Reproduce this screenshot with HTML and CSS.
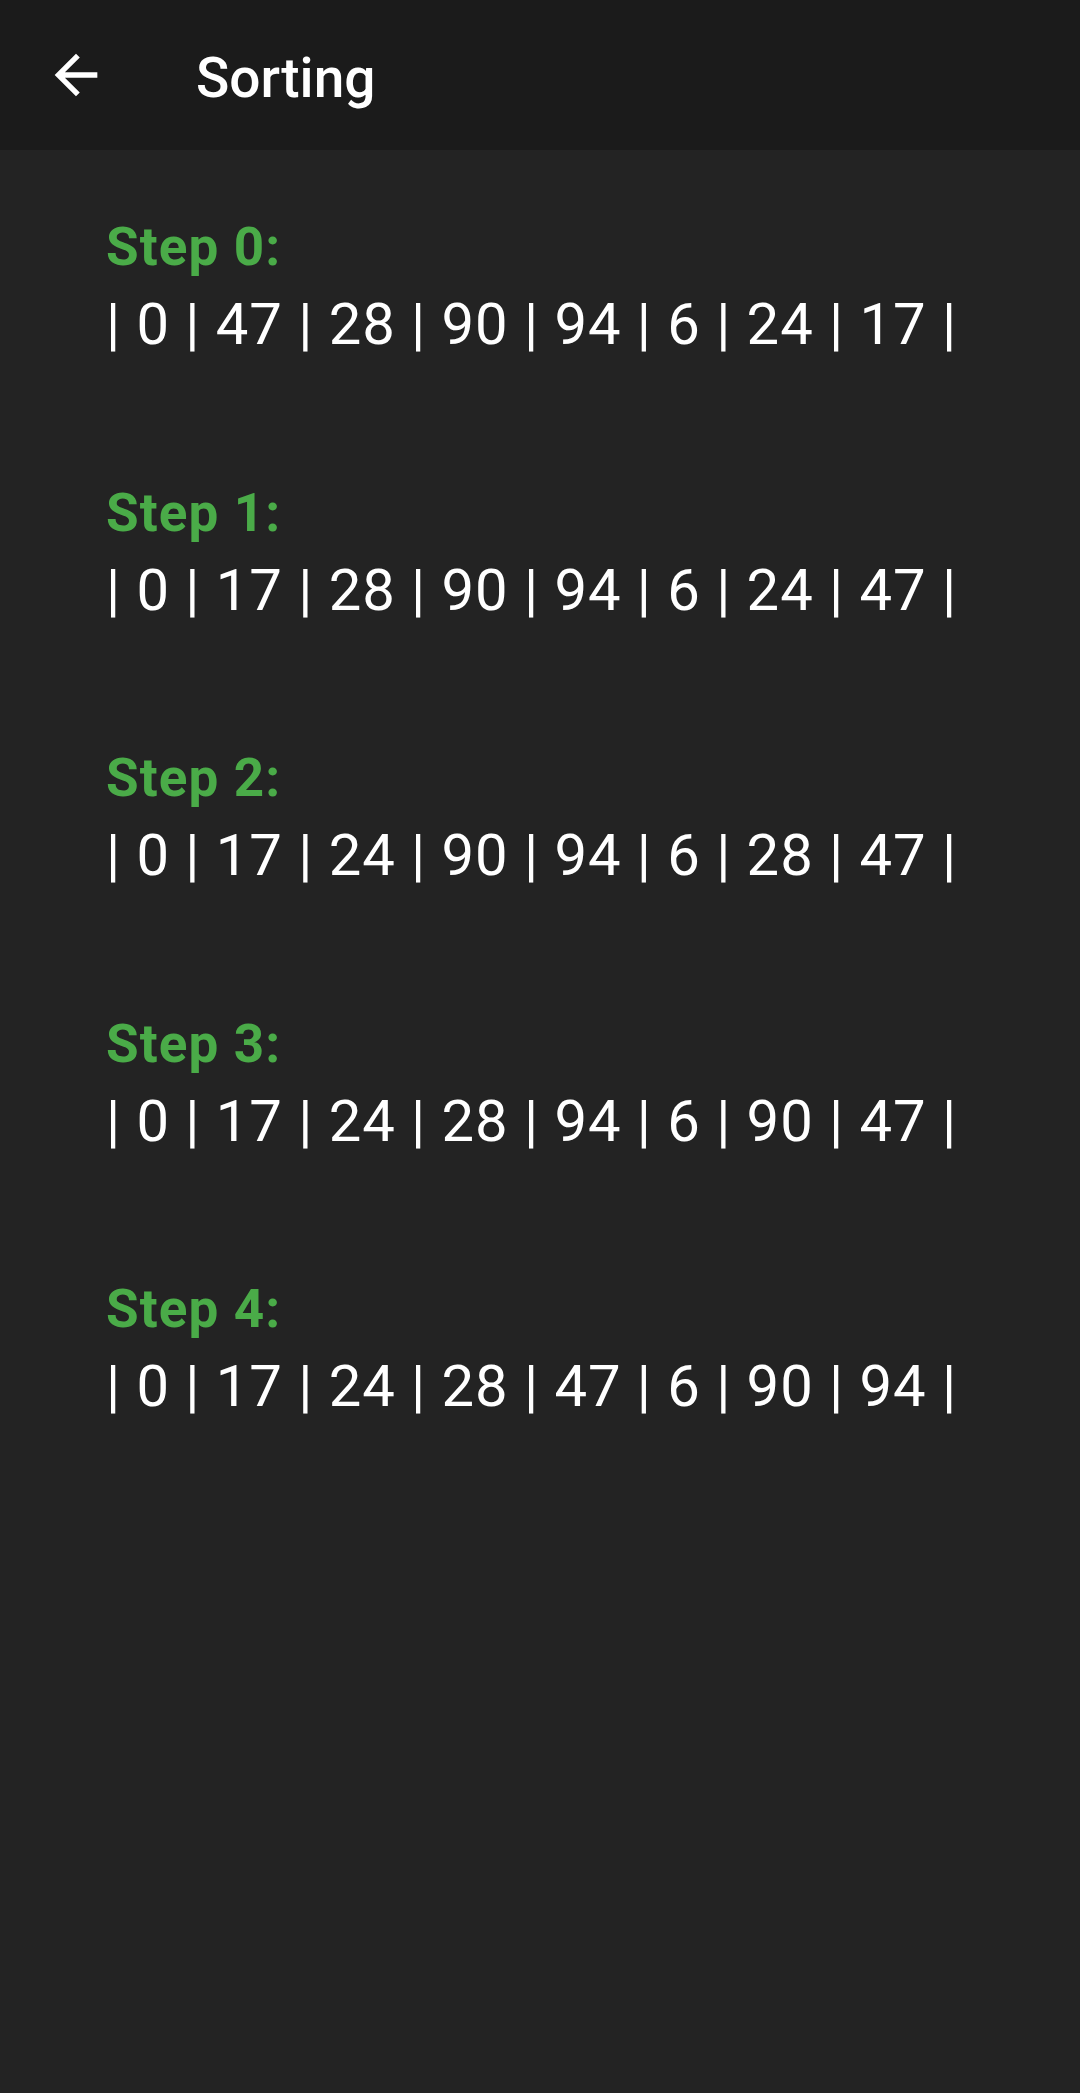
FILE: index.html
```html
<!DOCTYPE html>
<html>
<head>
<meta charset="utf-8">
<link rel="stylesheet" href="styles.css">
</head>
<body>
<header class="toolbar">
  <svg class="back" viewBox="0 0 24 24" width="64" height="64"><path d="M20 11H7.83l5.59-5.59L12 4l-8 8 8 8 1.41-1.41L7.83 13H20v-2z" fill="#ffffff"/></svg>
  <h1 class="title">Sorting</h1>
</header>
<main class="steps">
  <section class="step">
    <div class="label">Step 0:</div>
    <div class="values">| 0 | 47 | 28 | 90 | 94 | 6 | 24 | 17 |</div>
  </section>
  <section class="step">
    <div class="label">Step 1:</div>
    <div class="values">| 0 | 17 | 28 | 90 | 94 | 6 | 24 | 47 |</div>
  </section>
  <section class="step">
    <div class="label">Step 2:</div>
    <div class="values">| 0 | 17 | 24 | 90 | 94 | 6 | 28 | 47 |</div>
  </section>
  <section class="step">
    <div class="label">Step 3:</div>
    <div class="values">| 0 | 17 | 24 | 28 | 94 | 6 | 90 | 47 |</div>
  </section>
  <section class="step">
    <div class="label">Step 4:</div>
    <div class="values">| 0 | 17 | 24 | 28 | 47 | 6 | 90 | 94 |</div>
  </section>
</main>
</body>
</html>
```
FILE: styles.css
```css
html, body {
  margin: 0;
  padding: 0;
}
body {
  width: 1080px;
  min-height: 2093px;
  background: #232323;
  font-family: Roboto, "Noto Sans", sans-serif;
  color: #ffffff;
}
.toolbar {
  height: 150px;
  background: #1b1b1b;
  display: flex;
  align-items: center;
}
.back {
  margin-left: 44px;
  width: 64px;
  height: 64px;
  flex: none;
}
.title {
  margin: 6px 0 0 88px;
  font-size: 55px;
  font-weight: 500;
  line-height: 64px;
  color: #ffffff;
}
.steps {
  padding: 65px 0 0 106px;
  display: flex;
  flex-direction: column;
  gap: 121.5px;
}
.step {
  display: flex;
  flex-direction: column;
  gap: 10px;
}
.label {
  font-size: 53px;
  font-weight: 700;
  line-height: 64px;
  letter-spacing: 1.1px;
  color: #4aab48;
}
.values {
  font-size: 58px;
  font-weight: 400;
  line-height: 70px;
  letter-spacing: 0.95px;
  color: #ffffff;
  white-space: pre;
}
```
